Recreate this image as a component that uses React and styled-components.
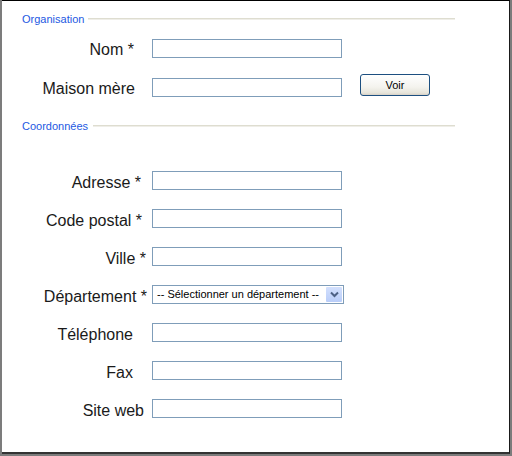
import React from 'react'
import styled, { createGlobalStyle } from 'styled-components'

const GlobalStyle = createGlobalStyle`
  html, body {
    margin: 0;
    padding: 0;
    background: #ffffff;
  }
  body {
    font-family: 'Liberation Sans', Arial, sans-serif;
  }
`

const Outer = styled.div`
  width: 512px;
  height: 456px;
  box-sizing: border-box;
  border-left: 2px solid #7c7c7c;
  border-right: 2px solid #7c7c7c;
  border-bottom: 2px solid #7c7c7c;
  background: #fff;
`

const Frame = styled.div`
  height: 100%;
  box-sizing: border-box;
  border-top: 1px solid #000;
  border-right: 1px solid #1a1a1a;
  border-bottom: 2px solid #333;
  padding-top: 11px;
  display: flex;
  flex-direction: column;
`

const Legend = styled.div`
  display: flex;
  align-items: center;
  height: 14px;
  margin-left: 20px;
  width: 433px;
  margin-top: ${({ top }) => top || 0}px;
  margin-bottom: ${({ bottom }) => bottom || 0}px;
`

const LegendText = styled.span`
  font-size: 11px;
  color: #2459e2;
  white-space: nowrap;
`

const LegendLine = styled.div`
  flex: 1;
  height: 2px;
  margin-left: ${({ gap }) => gap || 4}px;
  background: #efeee8;
  border-top: 1px solid #deddd0;
  box-sizing: border-box;
`

const Row = styled.div`
  display: flex;
  align-items: center;
  height: ${({ h }) => h || 39}px;
`

const Label = styled.label`
  width: 146px;
  box-sizing: border-box;
  padding-right: ${({ pr }) => pr || 0}px;
  padding-top: ${({ dy }) => dy || 0}px;
  text-align: right;
  font-size: 16px;
  color: #1a1a1a;
  white-space: nowrap;
  margin-right: 4px;
`

const TextInput = styled.input`
  width: 190px;
  height: 19px;
  box-sizing: border-box;
  border: 1px solid #7f9db9;
  padding: 0 3px;
  margin: 0;
  font-family: 'Liberation Sans', Arial, sans-serif;
  font-size: 11px;
  outline: none;
  background: #fff;
`

const SelectBox = styled.div`
  width: 192px;
  height: 19px;
  box-sizing: border-box;
  border: 1px solid #7f9db9;
  display: flex;
  align-items: center;
  background: #fff;
`

const SelectText = styled.span`
  flex: 1;
  font-size: 11px;
  color: #000;
  padding-left: 4px;
  white-space: nowrap;
  overflow: hidden;
`

const SelectArrow = styled.div`
  width: 16px;
  height: 15px;
  margin-right: 1px;
  display: flex;
  align-items: center;
  justify-content: center;
  background: linear-gradient(#d3e0fd, #b9cdf9);
  border-radius: 1px;
`

const Button = styled.button`
  width: 70px;
  height: 22px;
  margin: 0 0 6px 18px;
  padding: 0;
  border: 1px solid #1c4f80;
  border-radius: 3px;
  background: linear-gradient(#ffffff 0%, #f4f3ee 60%, #e6e4da 90%, #d6d0c5 100%);
  font-family: 'Liberation Sans', Arial, sans-serif;
  font-size: 11px;
  color: #000;
`

const Spacer = styled.div`
  height: ${({ h }) => h}px;
  flex-shrink: 0;
`

const Chevron = () => (
  <svg width='9' height='7' viewBox='0 0 9 7'>
    <path d='M1 1.5 L4.5 5 L8 1.5' fill='none' stroke='#4d6185' strokeWidth='2' />
  </svg>
)

const contact = [
  { label: 'Adresse *', pr: 7 },
  { label: 'Code postal *', pr: 6 },
  { label: 'Ville *', pr: 2 },
  { label: 'Département *', pr: 1, select: true },
  { label: 'Téléphone', pr: 15 },
  { label: 'Fax', pr: 15 },
  { label: 'Site web', pr: 4 }
]

const App = () => {
  return (
    <Outer>
      <GlobalStyle />
      <Frame>
        <Legend bottom={3}>
          <LegendText>Organisation</LegendText>
          <LegendLine gap={4} />
        </Legend>
        <Row>
          <Label pr={14} dy={2}>Nom *</Label>
          <TextInput type='text' />
        </Row>
        <Row>
          <Label pr={13} dy={2}>Maison mère</Label>
          <TextInput type='text' />
          <Button>Voir</Button>
        </Row>
        <Legend top={12}>
          <LegendText>Coordonnées</LegendText>
          <LegendLine gap={5} />
        </Legend>
        <Spacer h={28} />
        {contact.map((field, index) => (
          <Row key={index} h={38}>
            <Label pr={field.pr} dy={6}>{field.label}</Label>
            {field.select ? (
              <SelectBox>
                <SelectText>-- Sélectionner un département --</SelectText>
                <SelectArrow>
                  <Chevron />
                </SelectArrow>
              </SelectBox>
            ) : (
              <TextInput type='text' />
            )}
          </Row>
        ))}
      </Frame>
    </Outer>
  )
}

export default App
